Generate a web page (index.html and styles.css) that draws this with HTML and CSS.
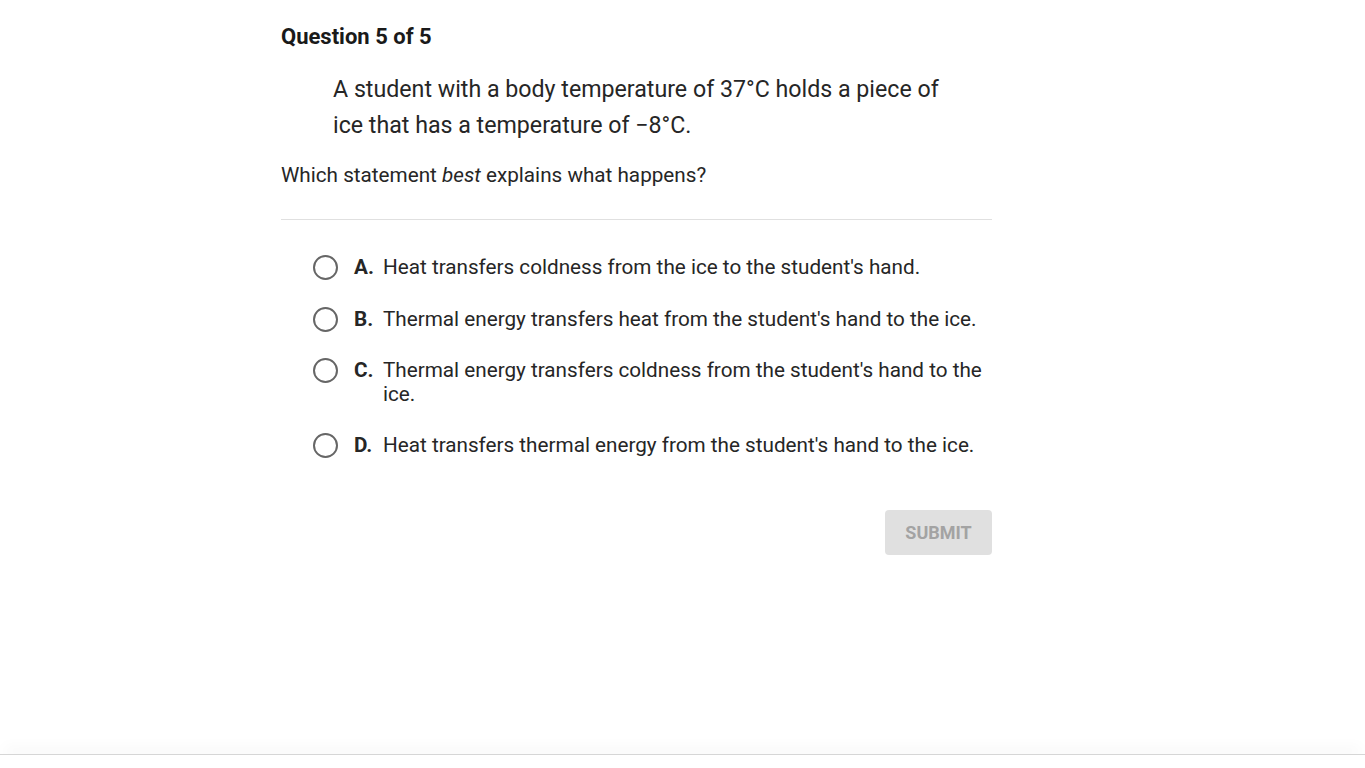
FILE: index.html
```html
<!DOCTYPE html>
<html>
<head>
<meta charset="utf-8">
<link rel="stylesheet" href="styles.css">
</head>
<body>
<div class="page">
  <main class="quiz">
    <h1 class="title">Question 5 of 5</h1>
    <p class="passage">A student with a body temperature of 37°C holds a piece of ice that has a temperature of −8°C.</p>
    <p class="prompt">Which statement <em>best</em> explains what happens?</p>
    <hr class="divider">
    <ul class="options">
      <li class="option"><span class="radio"></span><span class="letter">A.</span><span class="text">Heat transfers coldness from the ice to the student's hand.</span></li>
      <li class="option"><span class="radio"></span><span class="letter">B.</span><span class="text">Thermal energy transfers heat from the student's hand to the ice.</span></li>
      <li class="option"><span class="radio"></span><span class="letter">C.</span><span class="text">Thermal energy transfers coldness from the student's hand to the ice.</span></li>
      <li class="option"><span class="radio"></span><span class="letter">D.</span><span class="text">Heat transfers thermal energy from the student's hand to the ice.</span></li>
    </ul>
    <div class="actions"><button class="submit" type="button">SUBMIT</button></div>
  </main>
  <footer class="footer"></footer>
</div>
</body>
</html>
```
FILE: styles.css
```css
* { box-sizing: border-box; }
html, body { margin: 0; padding: 0; background: #fff; }
body { font-family: Roboto, "Noto Sans", sans-serif; color: #212121; }
.page { height: 768px; display: flex; flex-direction: column; }
.quiz { width: 711px; margin-left: 281px; padding-top: 23px; flex: 1; }
.title { margin: 0; font-size: 22px; font-weight: 700; line-height: 28px; color: #1a1a1a; }
.passage { margin: 20px 0 0 52px; width: 615px; font-size: 23.2px; line-height: 36px; color: #262626; }
.prompt { margin: 19px 0 0; font-size: 20.7px; line-height: 26px; color: #262626; }
.prompt em { font-style: italic; }
.divider { margin: 31px 0 0; border: 0; border-top: 1px solid #e0e0e0; height: 0; }
.options { list-style: none; margin: 35px 0 0; padding: 0 0 0 32px; display: flex; flex-direction: column; gap: 26.5px; }
.option { display: flex; align-items: flex-start; font-size: 20.7px; line-height: 24px; color: #262626; }
.radio { flex: none; width: 25px; height: 25px; border: 2px solid #666; border-radius: 50%; margin-right: 16px; }
.letter { flex: none; font-weight: 700; width: 29px; }
.text { flex: 1; }
.actions { display: flex; justify-content: flex-end; margin-top: 52px; }
.submit { font-family: Roboto, sans-serif; font-size: 18px; font-weight: 700; color: #a3a3a3; background: #e0e0e0; border: 0; border-radius: 4px; width: 107px; height: 45px; padding: 0; }
.footer { height: 14px; border-top: 1px solid #d6d6d6; box-shadow: 0 -10px 14px -4px rgba(0,0,0,0.05); background: #fff; }
```
